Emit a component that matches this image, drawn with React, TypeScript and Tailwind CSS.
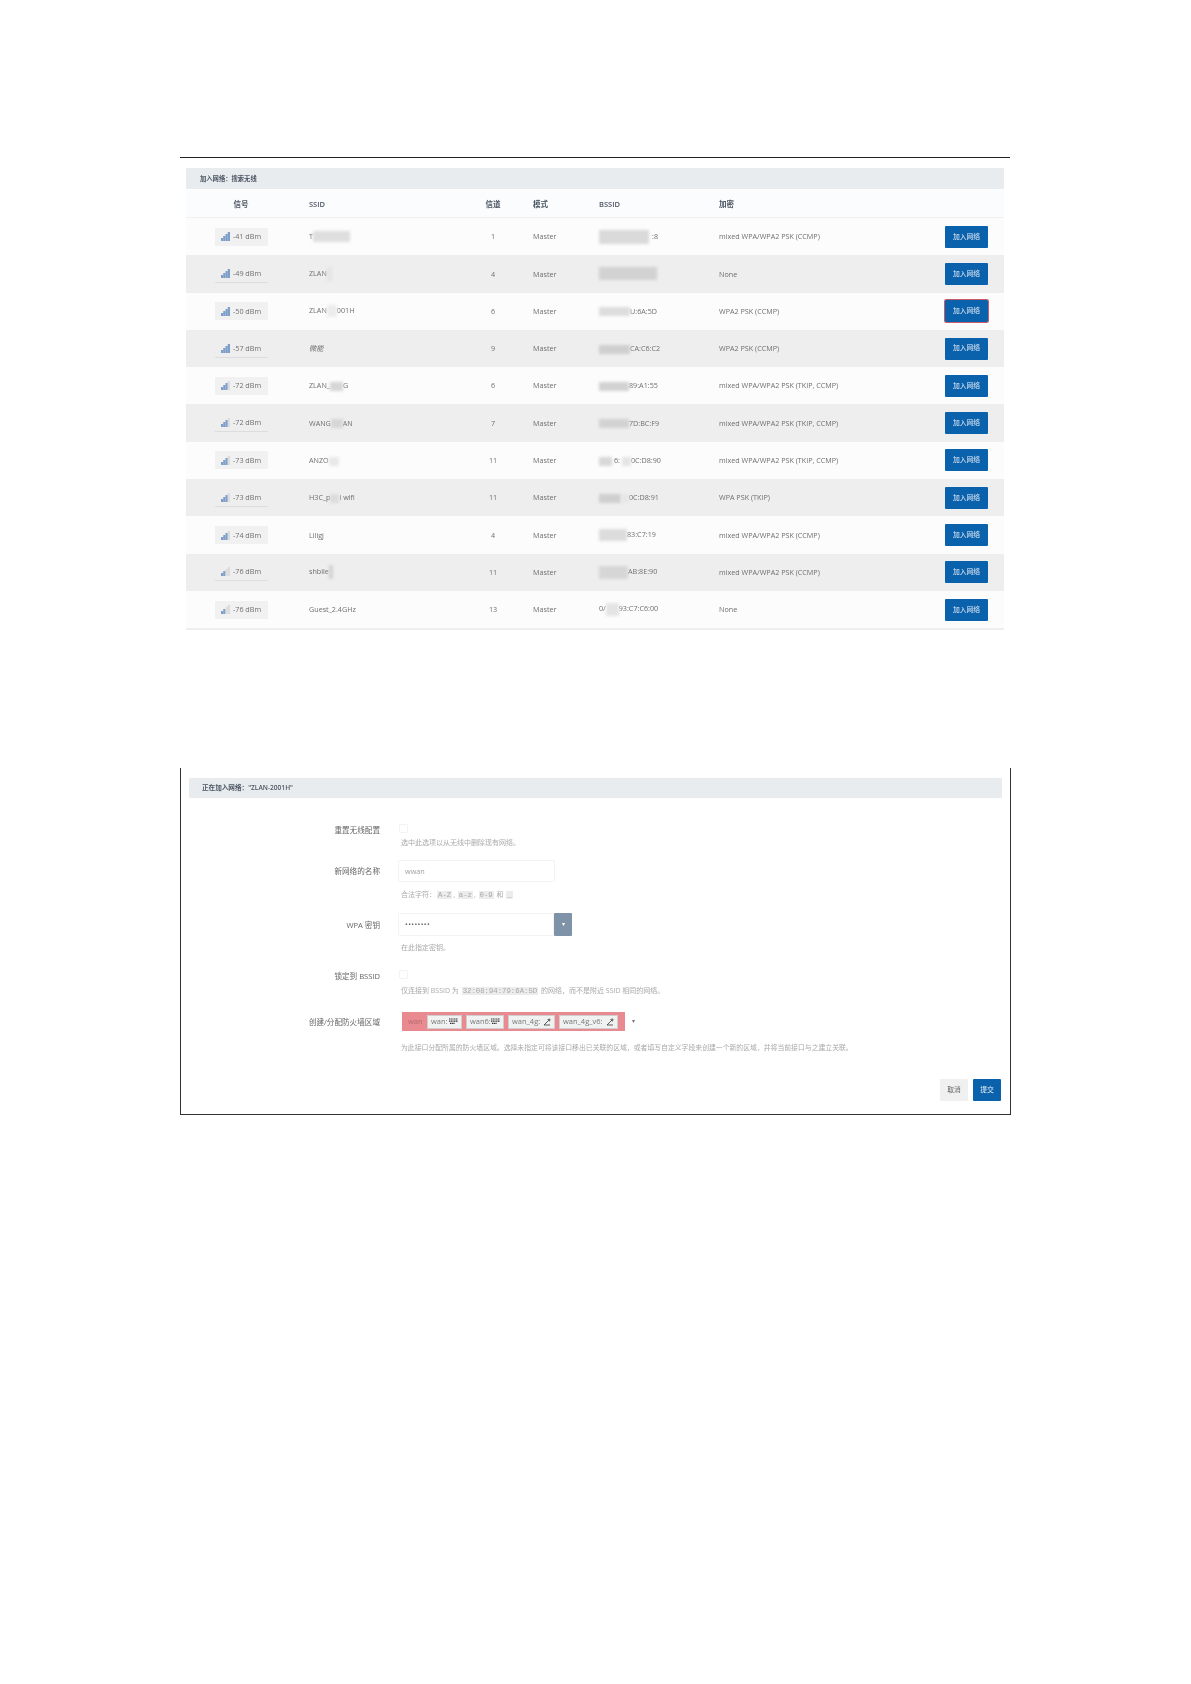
import React from "react";

type Row = { dbm: string; level: number; ssid: React.ReactNode; ch: string; bssid: React.ReactNode; enc: string; active?: boolean };

const Blur = ({ w, h = 10, c = "bg-[#d4d4d4]" }: { w: number; h?: number; c?: string }) => (
  <span className={`inline-block align-middle blur-[1.5px] ${c}`} style={{ width: w, height: h }} />
);

const rows: Row[] = [
  { dbm: "-41 dBm", level: 4, ssid: <>T<Blur w={37} h={11} c="bg-[#dedede]" /></>, ch: "1", bssid: <><Blur w={50} h={14} c="bg-[#dadada]" /><span className="ml-[3px]">:8</span></>, enc: "mixed WPA/WPA2 PSK (CCMP)" },
  { dbm: "-49 dBm", level: 4, ssid: <>ZLAN<Blur w={5} h={14} c="bg-[#e4e4e4]" /></>, ch: "4", bssid: <Blur w={58} h={13} c="bg-[#d2d2d2]" />, enc: "None" },
  { dbm: "-50 dBm", level: 4, ssid: <>ZLAN<Blur w={10} h={12} c="bg-[#ececec]" />001H</>, ch: "6", bssid: <><Blur w={31} h={9} c="bg-[#dddddd]" />U:6A:5D</>, enc: "WPA2 PSK (CCMP)", active: true },
  { dbm: "-57 dBm", level: 4, ssid: <span className="italic">微能</span>, ch: "9", bssid: <><Blur w={31} h={9} c="bg-[#cfcfcf]" />CA:C6:C2</>, enc: "WPA2 PSK (CCMP)" },
  { dbm: "-72 dBm", level: 3, ssid: <>ZLAN_<Blur w={13} h={9} c="bg-[#d6d6d6]" />G</>, ch: "6", bssid: <><Blur w={30} h={9} c="bg-[#d2d2d2]" />89:A1:55</>, enc: "mixed WPA/WPA2 PSK (TKIP, CCMP)" },
  { dbm: "-72 dBm", level: 3, ssid: <>WANG<Blur w={12} h={9} c="bg-[#d6d6d6]" />AN</>, ch: "7", bssid: <><Blur w={30} h={9} c="bg-[#d2d2d2]" />7D:BC:F9</>, enc: "mixed WPA/WPA2 PSK (TKIP, CCMP)" },
  { dbm: "-73 dBm", level: 3, ssid: <>ANZO<Blur w={10} h={9} c="bg-[#e8e8e8]" /></>, ch: "11", bssid: <><Blur w={13} h={9} c="bg-[#d8d8d8]" /><span className="mx-[2px]">6:</span><Blur w={9} h={9} c="bg-[#e4e4e4]" />0C:D8:90</>, enc: "mixed WPA/WPA2 PSK (TKIP, CCMP)" },
  { dbm: "-73 dBm", level: 3, ssid: <>H3C_p<Blur w={9} h={9} c="bg-[#dcdcdc]" />i wifi</>, ch: "11", bssid: <><Blur w={22} h={9} c="bg-[#cfcfcf]" /><Blur w={8} h={9} c="bg-[#e6e6e6]" />0C:D8:91</>, enc: "WPA PSK (TKIP)" },
  { dbm: "-74 dBm", level: 3, ssid: "Liligj", ch: "4", bssid: <><Blur w={28} h={12} c="bg-[#dcdcdc]" />83:C7:19</>, enc: "mixed WPA/WPA2 PSK (CCMP)" },
  { dbm: "-76 dBm", level: 2, ssid: <>shbile<Blur w={4} h={14} c="bg-[#d2d2d2]" /></>, ch: "11", bssid: <><Blur w={29} h={13} c="bg-[#d6d6d6]" />AB:8E:90</>, enc: "mixed WPA/WPA2 PSK (CCMP)" },
  { dbm: "-76 dBm", level: 2, ssid: "Guest_2.4GHz", ch: "13", bssid: <>0/<Blur w={13} h={13} c="bg-[#e4e4e4]" />93:C7:C6:00</>, enc: "None" },
];

function Signal({ level }: { level: number }) {
  const bars = [3, 5, 7, 9];
  return (
    <svg width="9" height="9" viewBox="0 0 9 9" className="shrink-0">
      {bars.map((h, i) => (
        <rect key={i} x={i * 2.25} y={9 - h} width="2.25" height={h} fill={i < level ? "#7d9fc8" : "#dcdcdc"} />
      ))}
    </svg>
  );
}

function PortIcon({ mobile }: { mobile?: boolean }) {
  return mobile ? (
    <svg width="8" height="8" viewBox="0 0 8 8" className="shrink-0">
      <path d="M1 7 L6 2 M4.5 1.5 L7 1 L6.5 3.5 M1 7h6" stroke="#4a4a4a" strokeWidth="0.9" fill="none" />
    </svg>
  ) : (
    <svg width="9" height="7" viewBox="0 0 9 7" className="shrink-0">
      <path d="M0 1h9M0 3.2h9M1 5.4h5" stroke="#2f2f2f" strokeWidth="1.2" strokeDasharray="1.2 0.5" fill="none" />
    </svg>
  );
}

const Chip = ({ label, w, mobile }: { label: string; w: number; mobile?: boolean }) => (
  <span className="flex h-[14px] items-center justify-between border border-[#cfcfcf] bg-[#f0f2f2] px-[3px] text-[7.5px] text-[#777]" style={{ width: w }}>
    {label}
    <PortIcon mobile={mobile} />
  </span>
);

const Label = ({ children }: { children: React.ReactNode }) => (
  <div className="w-[199px] shrink-0 text-right text-[7.6px] leading-[12px] text-[#666]">{children}</div>
);

const Help = ({ children, className = "" }: { children: React.ReactNode; className?: string }) => (
  <div className={`pl-[3px] leading-[12px] text-[#a9a9a9] ${className}`}>{children}</div>
);

const Code = ({ children }: { children: React.ReactNode }) => (
  <span className="mx-[1px] bg-[#ececec] px-[1px] text-[7.3px] [font-family:'Liberation_Mono',monospace]">{children}</span>
);

const Check = () => <span className="ml-[1px] block h-[9px] w-[9px] rounded-[1px] border border-[#f3f3f3]" />;

export default function App() {
  return (
    <div className="min-h-[1684px] bg-white pt-[157px] pl-[180px] text-[#666] blur-[0.4px] [font-family:'Open_Sans','Noto_Sans_CJK_SC',sans-serif]">
      <section className="w-[830px] border-t border-[#222] px-[6px] pt-[10px]">
        <div className="w-[818px]">
          <div className="flex h-[21px] items-center rounded-[1px] bg-[#e9ecee] pl-[14px] text-[6.3px] font-semibold text-[#4b5563]">加入网络：搜索无线</div>
          <div className="mt-[1px] grid h-[28px] grid-cols-[124px_153px_70px_67px_119px_1fr] items-center border-b border-[#eef0f2] bg-[#fbfcfd] pt-[3px] text-[7.5px] font-semibold text-[#4b5563]">
            <div className="w-[110px] text-center">信号</div>
            <div className="-ml-[1px]">SSID</div>
            <div className="w-[60px] text-center">信道</div>
            <div>模式</div>
            <div className="-ml-[1px]">BSSID</div>
            <div>加密</div>
          </div>
          {rows.map((r, i) => (
            <div
              key={i}
              className={`grid h-[37.3px] grid-cols-[124px_153px_70px_67px_119px_1fr_59px] items-center text-[7.2px] text-[#6f6f6f] ${i % 2 ? "bg-[#eeeeee]" : "bg-[#fcfcfc]"}`}
            >
              <div className="flex w-[110px] justify-center">
                <span className={`flex h-[18px] w-[53px] items-center justify-center gap-[3px] ${i % 2 ? "border-b border-[#dddddd]" : "bg-[#f1f1f1]"}`}>
                  <Signal level={r.level} />
                  {r.dbm}
                </span>
              </div>
              <div className="-ml-[1px]">{r.ssid}</div>
              <div className="w-[60px] text-center">{r.ch}</div>
              <div>Master</div>
              <div className="-ml-[1px]">{r.bssid}</div>
              <div>{r.enc}</div>
              <div>
                <button className={`flex h-[22px] w-[43px] items-center justify-center rounded-[1px] bg-[#0a62ad] text-[6.8px] text-[#e8eef5] ${r.active ? "outline-[1.5px] outline-[#c95c68]" : ""}`}>加入网络</button>
              </div>
            </div>
          ))}
          <div className="h-[2px] bg-[#eeeeee]" />
        </div>
      </section>

      <section className="mt-[138px] h-[347px] w-[831px] border-x border-b border-[#333] pt-[10px]">
        <div className="ml-[8px] flex h-[20px] w-[813px] items-center rounded-[1px] bg-[#e9ecee] pl-[13px] text-[6.6px] font-semibold text-[#4b5563]">正在加入网络："ZLAN-2001H"</div>

        <div className="mt-[26px] flex gap-[18px]">
          <Label>重置无线配置</Label>
          <div>
            <Check />
            <Help className="mt-[4px] text-[7px]">选中此选项以从无线中删除现有网络。</Help>
          </div>
        </div>

        <div className="mt-[11px] flex gap-[18px]">
          <div className="pt-[5px]"><Label>新网络的名称</Label></div>
          <div>
            <div className="flex h-[22px] w-[157px] items-center rounded-[1px] border border-[#f3f3f3] pl-[6px] text-[7.3px] text-[#a0a0a0]">wwan</div>
            <Help className="mt-[7px] text-[7px]">合法字符：<Code>A-Z</Code>, <Code>a-z</Code>, <Code>0-9</Code> 和 <Code>_</Code></Help>
          </div>
        </div>

        <div className="mt-[12px] flex gap-[18px]">
          <div className="pt-[6px]"><Label>WPA 密钥</Label></div>
          <div>
            <div className="flex">
              <div className="flex h-[23px] w-[156px] items-center rounded-[1px] border border-[#f3f3f3] pl-[6px] text-[7.3px] tracking-[0.4px] text-[#666]">••••••••</div>
              <div className="flex h-[23px] w-[18px] items-center justify-center rounded-[1px] bg-[#7f93a8] text-[6px] text-white">▾</div>
            </div>
            <Help className="mt-[6px] text-[7px]">在此指定密钥。</Help>
          </div>
        </div>

        <div className="mt-[16px] flex gap-[18px]">
          <Label>锁定到 BSSID</Label>
          <div>
            <Check />
            <Help className="mt-[6px] text-[7px]">仅连接到 BSSID 为 <Code>32:08:94:79:6A:5D</Code> 的网络，而不是附近 SSID 相同的网络。</Help>
          </div>
        </div>

        <div className="mt-[15px] flex gap-[18px]">
          <div className="pt-[4px]"><Label>创建/分配防火墙区域</Label></div>
          <div>
            <div className="ml-[4px] flex items-center">
              <div className="flex h-[19px] w-[223px] items-center gap-[4px] bg-[#e88a8f] pl-[6px] text-[7.5px] text-[#b56a6e]">
                <span className="w-[15px] shrink-0">wan</span>
                <Chip label="wan:" w={35} />
                <Chip label="wan6:" w={38} />
                <Chip label="wan_4g:" w={47} mobile />
                <Chip label="wan_4g_v6:" w={59} mobile />
              </div>
              <span className="ml-[7px] text-[6px] text-[#777]">▾</span>
            </div>
            <Help className="mt-[11px] whitespace-nowrap text-[6.85px]">为此接口分配所属的防火墙区域。选择未指定可将该接口移出已关联的区域，或者填写自定义字段来创建一个新的区域，并将当前接口与之建立关联。</Help>
          </div>
        </div>

        <div className="mt-[25px] flex justify-end gap-[5px] pr-[9px]">
          <button className="h-[22px] w-[28px] rounded-[1px] bg-[#f0f0f0] text-[6.8px] text-[#666]">取消</button>
          <button className="h-[22px] w-[28px] rounded-[1px] bg-[#0a62ad] text-[6.8px] text-[#e8eef5]">提交</button>
        </div>
      </section>
    </div>
  );
}
